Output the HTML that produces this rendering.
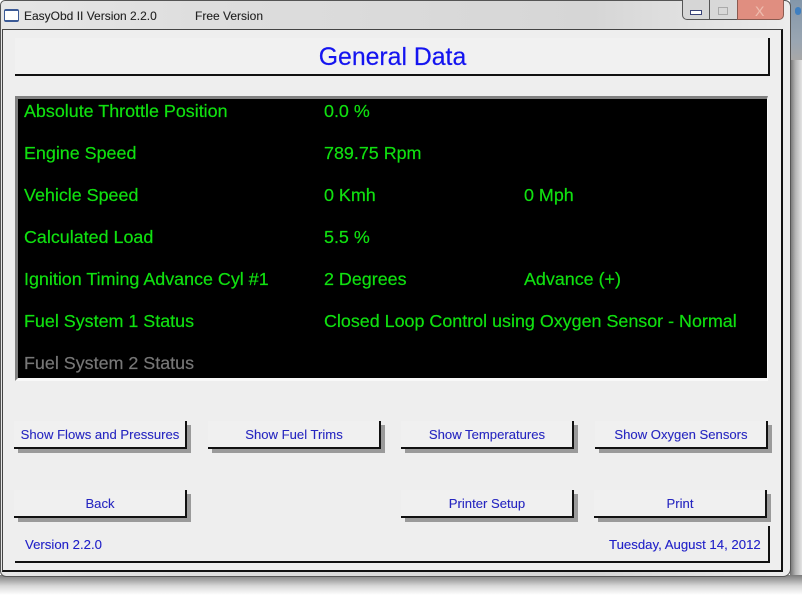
<!DOCTYPE html>
<html>
<head>
<meta charset="utf-8">
<style>
html,body{margin:0;padding:0;background:#fff}
#page{position:relative;width:802px;height:595px;overflow:hidden;background:#fff;font-family:"Liberation Sans",sans-serif}
#page div{position:absolute;box-sizing:border-box}
.t{white-space:nowrap;line-height:18px;font-size:17.9px;color:#10e010;-webkit-text-stroke:.2px currentColor}
.b{-webkit-text-stroke:.1px currentColor}
.btn{background:#f0f0f0;border-right:2px solid #111;border-bottom:2px solid #111;box-shadow:4px 4px 0 #9a9a9a;color:#2626c0;font-size:13.1px;text-align:center;line-height:27px;height:28px;padding-left:1px;-webkit-text-stroke:.1px currentColor}
</style>
</head>
<body>
<div id="page">
  <div style="left:790px;top:60px;width:12px;height:535px;background:linear-gradient(90deg,#6e6e6e,#b4b4b4 45%,#e4e4e4)"></div>
  <div style="left:790px;top:0;width:12px;height:60px;background:linear-gradient(180deg,#8497aa,#9aa6b2 70%,#a8a8a8)"></div>
  <div style="left:795px;top:7px;width:6px;height:8px;background:#3f7fc0;border-radius:3px"></div>
  <div style="left:0;top:575px;width:802px;height:20px;background:linear-gradient(#7a7a7a,#d8d8d8 55%,#fff)"></div>
  <div style="left:0;top:0;width:791px;height:577px;background:linear-gradient(90deg,#e6e6e6,#dedede 25%,#d6d6d6 75%,#ececec);border-radius:5px 6px 8px 6px;border:1px solid #555"></div>

  <div style="left:4px;top:9px;width:15px;height:13px;background:#fff;border:1px solid #3b5a96;border-top-width:2px;border-bottom-width:2px;border-radius:2px"></div>
  <div class="t b" style="left:24px;top:7px;font-size:12px;color:#222">EasyObd II Version 2.2.0</div>
  <div class="t b" style="left:195px;top:7px;font-size:12px;color:#222">Free Version</div>

  <div style="left:682px;top:0;width:27px;height:20px;background:#d6d6d6;border:1px solid #555;border-top:none;border-right:none;border-radius:0 0 0 5px"></div>
  <div style="left:690px;top:10px;width:12px;height:5px;background:#fff;border:1px solid #3a4478"></div>
  <div style="left:709px;top:0;width:28px;height:20px;background:#d8d8d8;border:1px solid #555;border-top:none;border-right:none"></div>
  <div style="left:718px;top:7px;width:10px;height:8px;border:1px solid #aaa"></div>
  <div style="left:737px;top:0;width:47px;height:20px;background:#e08e80;border:1px solid #8a5a50;border-top:none;border-radius:0 0 5px 0"></div>
  <div class="t b" style="left:755px;top:2px;font-size:14px;color:#eebcae">X</div>

  <div style="left:2px;top:29px;width:781px;height:543px;background:#eeeeee;border:1px solid #444;border-right:2px solid #111;border-bottom:2px solid #111"></div>

  <div style="left:15px;top:38px;width:755px;height:38px;background:#f1f1f1;border-right:2px solid #111;border-bottom:2px solid #111"></div>
  <div class="t" style="left:15px;top:44px;width:755px;text-align:center;font-size:24.8px;line-height:28px;color:#1414f0">General Data</div>

  <div style="left:15px;top:96px;width:753px;height:285px;background:#000;border-top:3px solid #808080;border-left:3px solid #808080;border-right:1px solid #f8f8f8;border-bottom:3px solid #f8f8f8"></div>

  <div class="t" style="left:24px;top:102px">Absolute Throttle Position</div>
  <div class="t" style="left:324px;top:102px">0.0 %</div>
  <div class="t" style="left:24px;top:144px">Engine Speed</div>
  <div class="t" style="left:324px;top:144px">789.75 Rpm</div>
  <div class="t" style="left:24px;top:186px">Vehicle Speed</div>
  <div class="t" style="left:324px;top:186px">0 Kmh</div>
  <div class="t" style="left:524px;top:186px">0 Mph</div>
  <div class="t" style="left:24px;top:228px">Calculated Load</div>
  <div class="t" style="left:324px;top:228px">5.5 %</div>
  <div class="t" style="left:24px;top:270px">Ignition Timing Advance Cyl #1</div>
  <div class="t" style="left:324px;top:270px">2 Degrees</div>
  <div class="t" style="left:524px;top:270px">Advance (+)</div>
  <div class="t" style="left:24px;top:312px">Fuel System 1 Status</div>
  <div class="t" style="left:324px;top:312px">Closed Loop Control using Oxygen Sensor - Normal</div>
  <div class="t" style="left:24px;top:354px;color:#777">Fuel System 2 Status</div>

  <div class="btn" style="left:14px;top:421px;width:173px">Show Flows and Pressures</div>
  <div class="btn" style="left:208px;top:421px;width:173px">Show Fuel Trims</div>
  <div class="btn" style="left:401px;top:421px;width:173px">Show Temperatures</div>
  <div class="btn" style="left:595px;top:421px;width:173px">Show Oxygen Sensors</div>
  <div class="btn" style="left:14px;top:490px;width:173px">Back</div>
  <div class="btn" style="left:401px;top:490px;width:173px">Printer Setup</div>
  <div class="btn" style="left:594px;top:490px;width:173px">Print</div>

  <div style="left:15px;top:526px;width:755px;height:37px;border-right:2px solid #111;border-bottom:2px solid #111"></div>
  <div class="t b" style="left:25px;top:536px;font-size:13.2px;color:#2020c8">Version 2.2.0</div>
  <div class="t b" style="left:609px;top:536px;font-size:13.2px;color:#2020c8">Tuesday, August 14, 2012</div>
</div>
</body>
</html>
